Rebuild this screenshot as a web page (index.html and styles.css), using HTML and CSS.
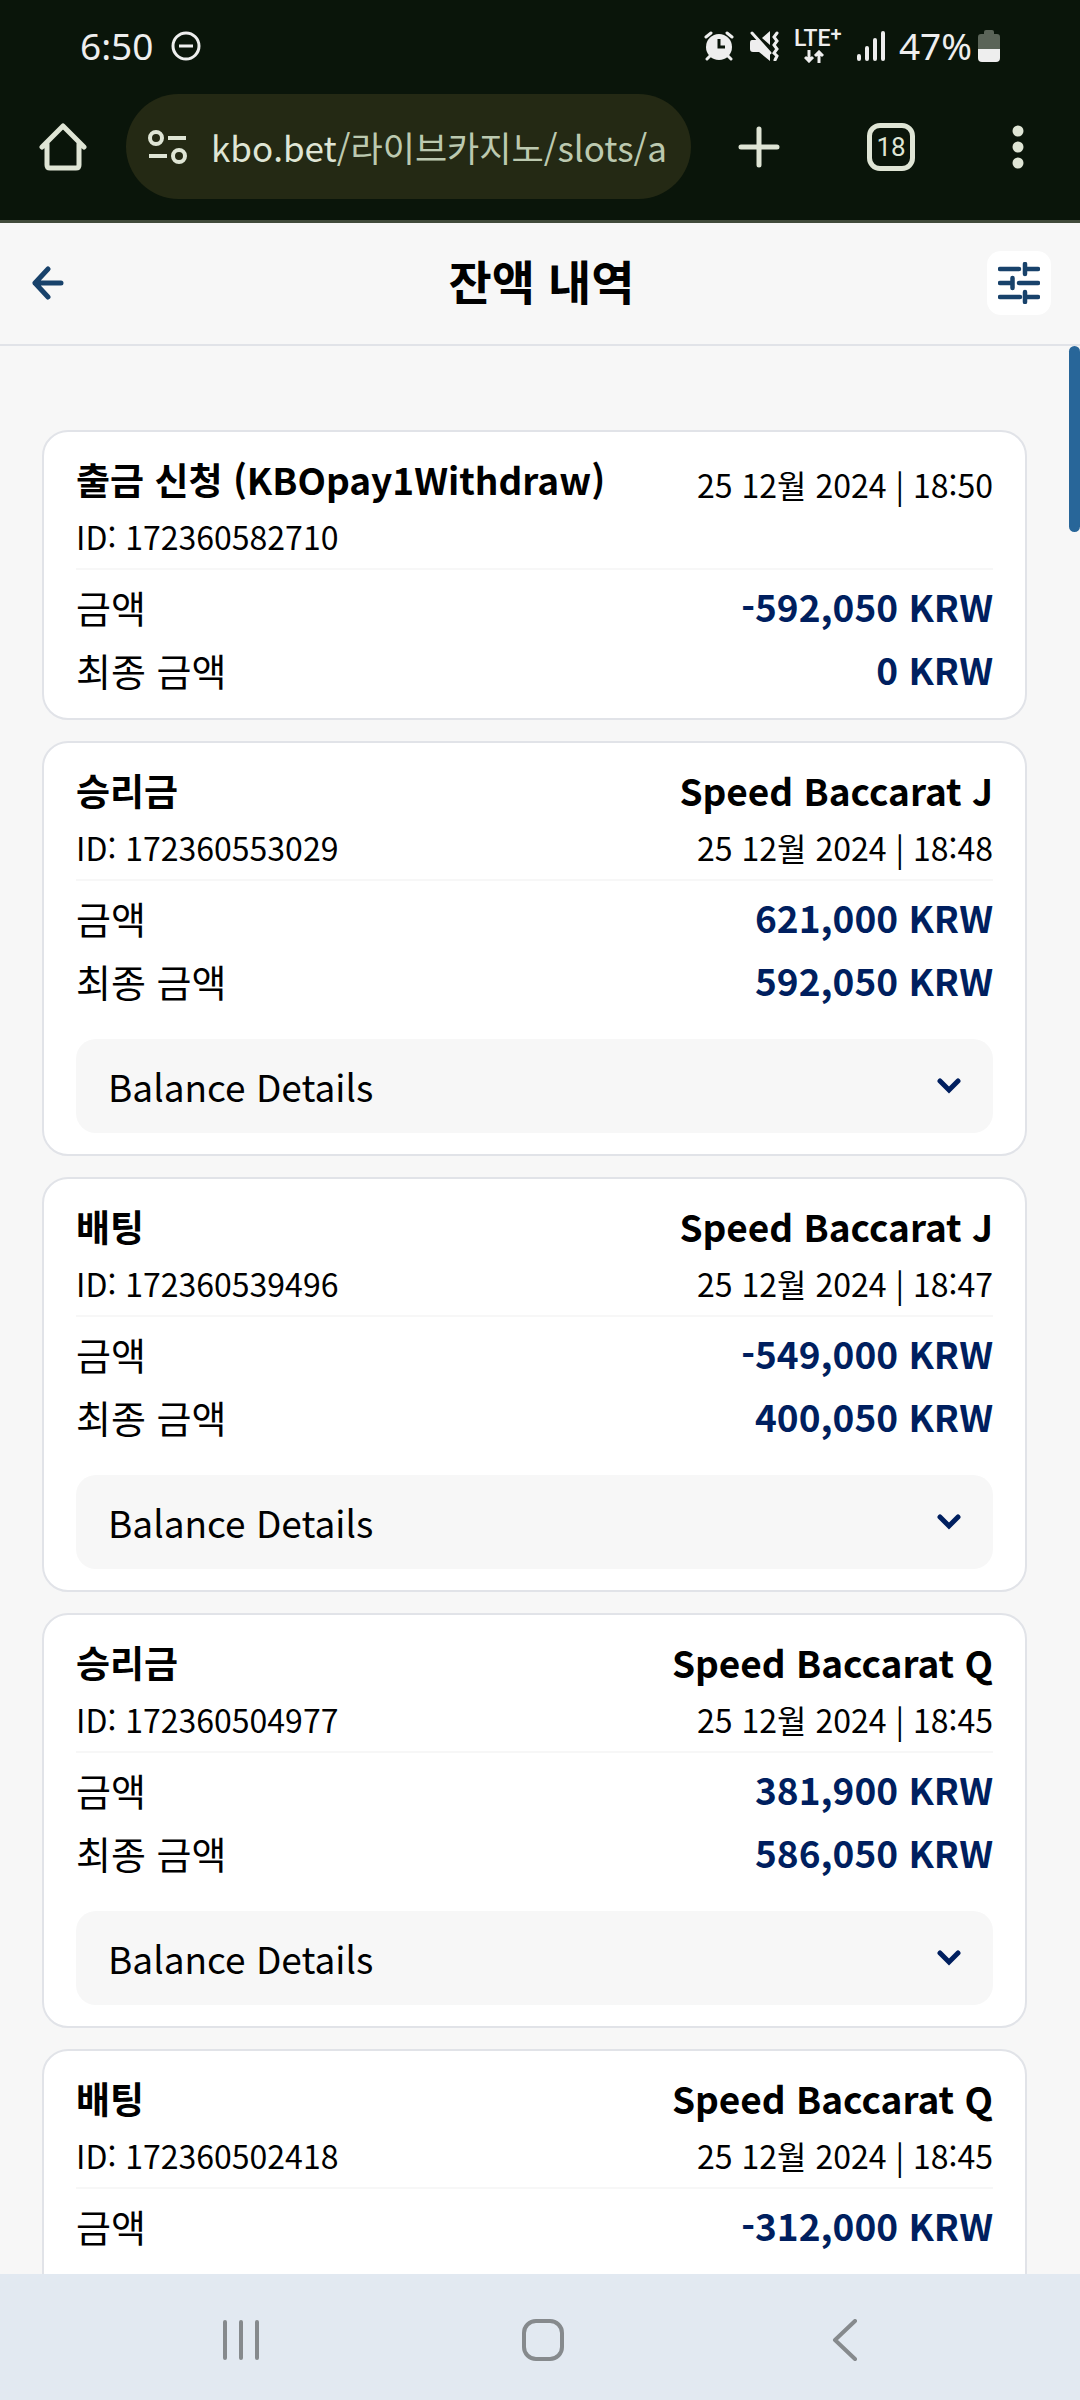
FILE: index.html
```html
<!DOCTYPE html>
<html lang="ko">
<head>
<meta charset="utf-8">
<meta name="viewport" content="width=device-width, initial-scale=1">
<title>잔액 내역</title>
<link rel="stylesheet" href="styles.css">
</head>
<body>

<svg class="defs" aria-hidden="true">
  <symbol id="ico-down" viewBox="0 0 24 16"><path d="M3 3l9 9 9-9" fill="none" stroke="currentColor" stroke-width="5" stroke-linecap="round"/></symbol>
</svg>

<!-- status bar -->
<div class="status">
  <span class="clock">6:50</span>
  <svg class="dnd" width="30" height="30" viewBox="0 0 30 30" fill="none" stroke="currentColor" stroke-width="3"><circle cx="15" cy="15" r="13"/><path d="M8 15h14"/></svg>
  <div class="sticons">
    <svg width="30" height="30" viewBox="0 0 30 30">
      <circle cx="15" cy="16" r="13" fill="currentColor"/>
      <path d="M2 6l5-4M28 6l-5-4M6 25l-3 3M24 25l3 3" stroke="currentColor" stroke-width="3" stroke-linecap="round"/>
      <path d="M15 8v8h6" fill="none" stroke="#0a150a" stroke-width="3"/>
    </svg>
    <svg class="mute" width="30" height="30" viewBox="0 0 30 30">
      <path d="M3 9h5l13 12v9L10 21H4q-3 0-3-3v-6q0-3 2-3zM13 7l8-7v14z" fill="currentColor"/>
      <path d="M3 2l18 20" stroke="currentColor" stroke-width="3" stroke-linecap="round"/>
      <path d="M28 2l-3 4 3 4-3 4 3 4-3 4 3 3-2 4" fill="none" stroke="currentColor" stroke-width="3" stroke-linecap="round"/>
    </svg>
    <span class="lte"><span>LTE<sup>+</sup></span>
      <svg width="20" height="13" viewBox="0 0 20 13" fill="none" stroke="currentColor" stroke-width="3"><path d="M5 0v11M1 7l4 4 4-4M15 13V2M11 6l4-4 4 4"/></svg>
    </span>
    <svg class="signal" width="30" height="30" viewBox="0 0 30 30" stroke="currentColor" stroke-width="4" stroke-linecap="round"><path d="M3 25v3M11 17v11M19 9v19M27 2v26"/></svg>
    <span class="percent">47%</span>
    <svg width="22" height="32" viewBox="0 0 22 32"><path d="M6 2q0-2 2-2h6q2 0 2 2v2h3q3 0 3 3v13H0V7q0-3 3-3h3z" fill="#5b6458"/><path d="M0 19h22v9q0 4-4 4H4q-4 0-4-4z" fill="currentColor"/></svg>
  </div>
</div>

<!-- browser bar -->
<div class="browser">
  <button class="bbtn home" aria-label="홈"><svg width="48" height="48" viewBox="0 0 48 48" fill="none" stroke="currentColor" stroke-width="5" stroke-linejoin="round" stroke-linecap="round"><path d="M3 24L24 3l21 21M8 20v22q0 3 3 3h26q3 0 3-3V20"/></svg></button>
  <button class="url">
    <svg width="40" height="34" viewBox="0 0 40 34" fill="none" stroke="currentColor" stroke-width="4"><circle cx="8" cy="8" r="6"/><path d="M20 8h18M1 26h18"/><circle cx="31" cy="26" r="6"/></svg>
    <span class="urltext">kbo.bet<i>/라이브카지노/slots/a</i></span>
  </button>
  <button class="bbtn plus" aria-label="새 탭"><svg width="42" height="42" viewBox="0 0 42 42" stroke="currentColor" stroke-width="5" stroke-linecap="round"><path d="M21 3v36M3 21h36"/></svg></button>
  <button class="bbtn tabs" aria-label="탭">18</button>
  <button class="bbtn more" aria-label="메뉴"><svg width="12" height="44" viewBox="0 0 12 44" fill="currentColor"><circle cx="6" cy="6" r="5.500"/><circle cx="6" cy="22" r="5.500"/><circle cx="6" cy="38" r="5.500"/></svg></button>
</div>

<!-- page header -->
<header class="pagehead">
  <a href="#" class="back" aria-label="뒤로"><svg width="32" height="34" viewBox="0 0 32 34" fill="none" stroke="currentColor" stroke-width="5" stroke-linecap="round" stroke-linejoin="round"><path d="M29 17H3M16 3L3 17l13 14"/></svg></a>
  <h1>잔액 내역</h1>
  <button class="filter" aria-label="필터"><svg width="42" height="42" viewBox="0 0 42 42" fill="none" stroke="currentColor" stroke-width="4.500" stroke-linecap="round"><path d="M2 7h19M27 2v10M28 7h12M2 21h12M14.500 16v10M21 21h19M2 35h20M27 30v10M28 35h12"/></svg></button>
</header>

<main class="list">
  <span class="thumb"></span>

  <section class="card">
    <div class="cardtop">
      <div class="lt"><h2>출금 신청 (KBOpay1Withdraw)</h2><p>ID: 172360582710</p></div>
      <div class="rt only"><p>25 12월 2024 | 18:50</p></div>
    </div>
    <dl class="sums">
      <dt>금액</dt><dd>-592,050 KRW</dd>
      <dt>최종 금액</dt><dd>0 KRW</dd>
    </dl>
  </section>

  <section class="card">
    <div class="cardtop">
      <div class="lt"><h2>승리금</h2><p>ID: 172360553029</p></div>
      <div class="rt"><h3>Speed Baccarat J</h3><p>25 12월 2024 | 18:48</p></div>
    </div>
    <dl class="sums">
      <dt>금액</dt><dd>621,000 KRW</dd>
      <dt>최종 금액</dt><dd>592,050 KRW</dd>
    </dl>
    <button class="details" aria-expanded="false">Balance Details <svg width="24" height="16"><use href="#ico-down"/></svg></button>
  </section>

  <section class="card">
    <div class="cardtop">
      <div class="lt"><h2>배팅</h2><p>ID: 172360539496</p></div>
      <div class="rt"><h3>Speed Baccarat J</h3><p>25 12월 2024 | 18:47</p></div>
    </div>
    <dl class="sums">
      <dt>금액</dt><dd>-549,000 KRW</dd>
      <dt>최종 금액</dt><dd>400,050 KRW</dd>
    </dl>
    <button class="details" aria-expanded="false">Balance Details <svg width="24" height="16"><use href="#ico-down"/></svg></button>
  </section>

  <section class="card">
    <div class="cardtop">
      <div class="lt"><h2>승리금</h2><p>ID: 172360504977</p></div>
      <div class="rt"><h3>Speed Baccarat Q</h3><p>25 12월 2024 | 18:45</p></div>
    </div>
    <dl class="sums">
      <dt>금액</dt><dd>381,900 KRW</dd>
      <dt>최종 금액</dt><dd>586,050 KRW</dd>
    </dl>
    <button class="details" aria-expanded="false">Balance Details <svg width="24" height="16"><use href="#ico-down"/></svg></button>
  </section>

  <section class="card last">
    <div class="cardtop">
      <div class="lt"><h2>배팅</h2><p>ID: 172360502418</p></div>
      <div class="rt"><h3>Speed Baccarat Q</h3><p>25 12월 2024 | 18:45</p></div>
    </div>
    <dl class="sums">
      <dt>금액</dt><dd>-312,000 KRW</dd>
    </dl>
  </section>
</main>

<!-- system navigation -->
<nav class="sysnav">
  <button aria-label="최근 앱"><svg width="42" height="42" viewBox="0 0 42 42"><path d="M5 3v36M21 3v36M37 3v36"/></svg></button>
  <button aria-label="홈 화면"><svg width="42" height="42" viewBox="0 0 42 42"><rect x="2" y="2" width="38" height="38" rx="12"/></svg></button>
  <button aria-label="이전"><svg width="42" height="42" viewBox="0 0 42 42"><path d="M31 2L11 21l20 19"/></svg></button>
</nav>

</body>
</html>
```
FILE: styles.css
```css
* { box-sizing:border-box; }
body { margin:0; height:100vh; display:flex; flex-direction:column; overflow:hidden; background:#f7f7f7; color:#000; font-family:"Noto Sans CJK KR","Noto Sans",sans-serif; }
h1,h2,h3,p,dl,dd { margin:0; }
button { margin:0; padding:0; border:0; background:none; color:inherit; font-family:inherit; cursor:pointer; }
svg { display:block; flex:none; }
.defs { width:0; height:0; position:absolute; }

/* status bar */
.status { flex:none; display:flex; align-items:center; height:94px; padding:0 80px 2px; background:#0a150a; color:#eee; font:37px/40px "Noto Sans",sans-serif; }
.dnd { margin-left:18px; }
.sticons { display:flex; align-items:center; margin-left:auto; }
.mute { margin-left:15px; }
.lte { display:flex; flex-direction:column; margin-left:15px; width:54px; font-family:Roboto,sans-serif; font-size:23px; font-weight:500; line-height:18px; }
.lte sup { font-size:20px; line-height:0; vertical-align:5px; }
.lte svg { margin:2px 0 0 10px; }
.signal { margin-left:8px; }
.percent { margin:0 6px 0 13px; }

/* browser bar */
.browser { flex:none; display:flex; align-items:center; height:129px; padding:0 56px 21px 39px; border-bottom:3px solid #414b3b; background:#0a150a; color:#dfe5d5; }
.bbtn { flex:none; display:flex; align-items:center; justify-content:center; }
.url { flex:1; min-width:0; display:flex; align-items:center; height:105px; margin:0 47px 0 39px; padding:0 22px; border-radius:53px; background:#242914; font-size:35px; line-height:52px; }
.urltext { margin-left:23px; white-space:nowrap; }
.urltext i { font-style:normal; color:#bcc9b0; }
.tabs { width:48px; height:48px; margin:0 97px 0 87px; border:5px solid #dfe5d5; border-radius:13px; font:26px/30px Roboto,sans-serif; }

/* page header */
.pagehead { flex:none; display:flex; align-items:center; justify-content:space-between; height:123px; padding:0 29px 2px 32px; border-bottom:2px solid #e1e3e8; color:#18426b; }
.back { width:64px; color:inherit; }
.pagehead h1 { padding-bottom:5px; font-size:47px; line-height:60px; font-weight:700; color:#000; }
.filter { display:flex; align-items:center; justify-content:center; width:64px; height:64px; border-radius:14px; background:#fff; }

/* list */
.list { position:relative; flex:1; min-height:0; overflow:hidden; padding:84px 53px 0 42px; }
.thumb { position:absolute; top:0; right:0; width:11px; height:186px; border-radius:6px; background:#286699; }
.card { margin-bottom:21px; padding:19px 32px 16px; border:2px solid #e1e3e8; border-radius:26px; background:#fff; }
.cardtop { display:flex; justify-content:space-between; height:119px; border-bottom:2px solid #f7f7f7; }
.cardtop h2,.cardtop h3 { font-size:37px; line-height:57px; font-weight:700; }
.cardtop p { font-size:32px; line-height:57px; }
.rt { text-align:right; }
.rt.only { padding-top:5px; }
.sums { display:grid; grid-template-columns:auto auto; justify-content:space-between; padding:5px 0 1px; font-size:38px; line-height:63px; }
.sums dd { text-align:right; font-size:37px; font-weight:700; color:#001f5f; }
.details { display:flex; align-items:center; justify-content:space-between; width:100%; height:94px; margin:26px 0 5px; padding:0 32px; border-radius:20px; background:#f7f7f7; font-size:37px; line-height:56px; text-align:left; }
.details svg { color:#001f5f; }
.last { min-height:415px; }

/* system navigation */
.sysnav { flex:none; display:flex; height:126px; padding:5px 84px 0 90px; background:#e2e9f1; }
.sysnav button { flex:1; display:flex; align-items:center; justify-content:center; }
.sysnav svg { fill:none; stroke:#868a8d; stroke-width:4; stroke-linecap:round; stroke-linejoin:round; }
```
